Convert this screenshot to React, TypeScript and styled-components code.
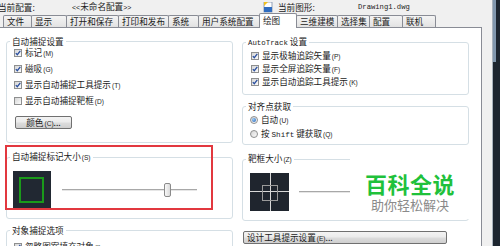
import React from 'react';
import styled, { createGlobalStyle } from 'styled-components';

const CJK = `"Noto Sans CJK SC", "Noto Sans", sans-serif`;
const MONO = `"Liberation Mono", "DejaVu Sans Mono", monospace`;
const SANS = `"Liberation Sans", Arial, sans-serif`;

const GlobalStyle = createGlobalStyle`
  html, body { margin: 0; padding: 0; background: #f0f0f0; }
  #root { width: 500px; height: 246px; overflow: hidden; }
`;

const Page = styled.div`
  width: 500px;
  height: 246px;
  display: flex;
  overflow: hidden;
  background: #f0f0f0;
  font-family: ${CJK};
  font-size: 8.6px;
  line-height: 12px;
  color: #1b1b1b;
`;

const Dialog = styled.div`
  width: 492px;
  flex: none;
  display: flex;
  flex-direction: column;
`;

const Header = styled.div`
  height: 13px;
  margin-left: -2px;
  display: grid;
  grid-template-columns: 74px 191px 15px 80px auto;
  align-items: center;
  white-space: nowrap;
`;

const Mono = styled.span<{ $size?: number }>`
  font-family: ${MONO};
  font-size: ${(p) => p.$size ?? 7.2}px;
`;

const Key = styled.span`
  font-family: ${SANS};
  font-size: 6.6px;
  margin-left: 1px;
`;

const Angle = styled.span`
  font-family: ${SANS};
  font-size: 7px;
`;

const TabStrip = styled.div`
  height: 15px;
  display: flex;
  align-items: flex-end;
  padding-left: 3px;
  position: relative;
  z-index: 1;
`;

const Tab = styled.div<{ $w: number; $active?: boolean }>`
  width: ${(p) => p.$w}px;
  box-sizing: border-box;
  margin-left: -1px;
  &:first-child {
    margin-left: 0;
  }
  height: ${(p) => (p.$active ? 15 : 12)}px;
  margin-bottom: ${(p) => (p.$active ? -1 : 0)}px;
  padding-left: 3px;
  border: 1px solid #898c95;
  border-bottom: none;
  border-radius: 2px 2px 0 0;
  background: ${(p) => (p.$active ? '#ffffff' : 'linear-gradient(#f4f4f4, #e2e2e2)')};
  line-height: ${(p) => (p.$active ? 12 : 10)}px;
  white-space: nowrap;
  overflow: hidden;
  position: relative;
  z-index: ${(p) => (p.$active ? 1 : 0)};
`;

const Panel = styled.div`
  flex: 1;
  margin-left: -1px;
  width: 483px;
  box-sizing: border-box;
  border: 1px solid #898c95;
  background: #ffffff;
  padding: 8px 0 0 6px;
  display: flex;
  align-items: flex-start;
  gap: 9px;
  position: relative;
`;

const Column = styled.div`
  width: 227px;
  flex: none;
  display: flex;
  flex-direction: column;
`;

const Group = styled.fieldset<{ $mt?: number }>`
  margin: ${(p) => p.$mt ?? 0}px 0 0 0;
  padding: 0;
  min-width: 0;
  border: 1px solid #d5dfe5;
  border-radius: 3px;
`;

const Legend = styled.legend`
  margin-left: 3px;
  padding: 0 2px;
  line-height: 10px;
  white-space: nowrap;
`;

const GroupBody = styled.div<{ $h: number; $pt: number; $pl: number }>`
  box-sizing: border-box;
  height: ${(p) => p.$h}px;
  padding: ${(p) => p.$pt}px 0 0 ${(p) => p.$pl}px;
  overflow: hidden;
`;

const Rows = styled.div<{ $gap: number }>`
  display: flex;
  flex-direction: column;
  gap: ${(p) => p.$gap}px;
`;

const Row = styled.div`
  height: 12px;
  display: flex;
  align-items: center;
  gap: 3px;
  white-space: nowrap;
`;

const Box = styled.span<{ $round?: boolean }>`
  width: 8px;
  height: 8px;
  box-sizing: border-box;
  flex: none;
  border: 1px solid #8e8f8f;
  border-radius: ${(p) => (p.$round ? '50%' : '0')};
  background: linear-gradient(135deg, #d6d6d6, #fbfbfb);
  display: flex;
  align-items: center;
  justify-content: center;
`;

const Dot = styled.span`
  width: 4px;
  height: 4px;
  border-radius: 50%;
  background: radial-gradient(circle at 35% 35%, #9acbf6, #1c5bb4);
`;

const Button = styled.button<{ $w: number; $mt?: number; $ml?: number; $center?: boolean }>`
  display: block;
  width: ${(p) => p.$w}px;
  height: 13px;
  margin: ${(p) => p.$mt ?? 0}px 0 0 ${(p) => p.$ml ?? 0}px;
  box-sizing: border-box;
  padding: 0 0 0 ${(p) => (p.$center ? 0 : 3)}px;
  border: 1px solid #707070;
  border-radius: 2px;
  background: linear-gradient(#f3f3f3 0%, #ebebeb 48%, #dddddd 52%, #cfcfcf 100%);
  font: inherit;
  line-height: 11px;
  color: inherit;
  text-align: ${(p) => (p.$center ? 'center' : 'left')};
  white-space: nowrap;
`;

const SizeRow = styled.div`
  display: flex;
  align-items: center;
  height: 38px;
`;

const Slider = styled.div<{ $w: number; $ml: number }>`
  width: ${(p) => p.$w}px;
  margin-left: ${(p) => p.$ml}px;
  height: 14px;
  position: relative;
  display: flex;
  align-items: center;
`;

const Track = styled.div`
  width: 100%;
  height: 2px;
  box-sizing: border-box;
  border-top: 1px solid #a8a8a8;
  background: #e6e6e6;
`;

const Thumb = styled.div`
  position: absolute;
  top: 0;
  width: 7px;
  height: 14px;
  box-sizing: border-box;
  border: 1px solid #8a8a8a;
  border-radius: 2px;
  background: linear-gradient(90deg, #f8f8f8, #dadada);
`;

const Highlight = styled.div`
  position: absolute;
  left: 5px;
  top: 117px;
  width: 208px;
  height: 65px;
  box-sizing: border-box;
  border: 2px solid #e2383f;
  pointer-events: none;
`;

const Watermark = styled.div`
  position: absolute;
  left: 350px;
  top: 131px;
  width: 120px;
  height: 60px;
  background: #ffffff;
  display: flex;
  flex-direction: column;
  align-items: center;
  padding-top: 13px;
  box-sizing: border-box;
`;

const WmTitle = styled.div`
  font-size: 22px;
  line-height: 22px;
  font-weight: 700;
  color: #1fc13b;
  letter-spacing: 0.5px;
`;

const WmSub = styled.div`
  margin-top: 4px;
  font-size: 13px;
  line-height: 14px;
  color: #8a8a8a;
`;

const Desktop = styled.div`
  flex: 1;
  background: #1d2630;
  border-left: 1px solid #a9b3bd;
`;

const DeskBar = styled.div`
  width: 3px;
  height: 62px;
  background: #8197ad;
`;

const Check = ({ on }: { on?: boolean }) => (
  <Box>
    {on && (
      <svg width="6" height="6" viewBox="0 0 6 6">
        <path d="M0.8 3.1 L2.3 4.7 L5.3 0.9" fill="none" stroke="#2a4f9f" strokeWidth="1.3" />
      </svg>
    )}
  </Box>
);

const Radio = ({ on }: { on?: boolean }) => <Box $round>{on && <Dot />}</Box>;

const DocIcon = () => (
  <svg width="11" height="11" viewBox="0 0 11 11">
    <rect x="1" y="0" width="8" height="10" fill="#ffffff" stroke="#7a8ca8" strokeWidth="0.8" />
    <rect x="1" y="5" width="8" height="5" fill="#2f6cc0" />
    <path d="M1 0 L5 0 L1 4 Z" fill="#f0c020" />
  </svg>
);

const MarkerPreview = () => (
  <svg width="38" height="38" viewBox="0 0 38 38">
    <rect width="38" height="38" fill="#212832" />
    <rect x="7" y="7" width="23" height="24" fill="none" stroke="#1a9a1a" strokeWidth="2" />
  </svg>
);

const AperturePreview = () => (
  <svg width="39" height="38" viewBox="0 0 39 38">
    <rect width="39" height="38" fill="#1f252e" />
    <line x1="20.5" y1="0" x2="20.5" y2="38" stroke="#d8d8d8" strokeWidth="1" />
    <line x1="0" y1="18.5" x2="39" y2="18.5" stroke="#d8d8d8" strokeWidth="1" />
    <rect x="12.5" y="12.5" width="15" height="15" fill="none" stroke="#9a9a9a" strokeWidth="1" />
  </svg>
);

const SizeSlider = ({ w, ml, value }: { w: number; ml: number; value: number }) => (
  <Slider $w={w} $ml={ml}>
    <Track />
    <Thumb style={{ left: `${value * (w - 7)}px` }} />
  </Slider>
);

const tabs: { label: string; w: number; active?: boolean }[] = [
  { label: '文件', w: 29 },
  { label: '显示', w: 36 },
  { label: '打开和保存', w: 53 },
  { label: '打印和发布', w: 51 },
  { label: '系统', w: 31 },
  { label: '用户系统配置', w: 62 },
  { label: '绘图', w: 38, active: true },
  { label: '三维建模', w: 42 },
  { label: '选择集', w: 33 },
  { label: '配置', w: 34 },
  { label: '联机', w: 34 },
];

export default function App() {
  return (
    <Page>
      <GlobalStyle />
      <Dialog>
        <Header>
          <span>当前配置:</span>
          <span>
            <Angle>&lt;&lt;</Angle>未命名配置<Angle>&gt;&gt;</Angle>
          </span>
          <DocIcon />
          <span>当前图形:</span>
          <Mono>Drawing1.dwg</Mono>
        </Header>
        <TabStrip>
          {tabs.map((t) => (
            <Tab key={t.label} $w={t.w} $active={t.active}>
              {t.label}
            </Tab>
          ))}
        </TabStrip>
        <Panel>
          <Column>
            <Group>
              <Legend>自动捕捉设置</Legend>
              <GroupBody $h={96} $pt={1} $pl={7}>
                <Rows $gap={4}>
                  <Row>
                    <Check on />
                    <span>
                      标记<Key>(M)</Key>
                    </span>
                  </Row>
                  <Row>
                    <Check on />
                    <span>
                      磁吸<Key>(G)</Key>
                    </span>
                  </Row>
                  <Row>
                    <Check on />
                    <span>
                      显示自动捕捉工具提示<Key>(T)</Key>
                    </span>
                  </Row>
                  <Row>
                    <Check />
                    <span>
                      显示自动捕捉靶框<Key>(D)</Key>
                    </span>
                  </Row>
                </Rows>
                <Button $w={57} $mt={9} $ml={1} $center>
                  颜色<Key>(C)</Key>...
                </Button>
              </GroupBody>
            </Group>
            <Group $mt={8}>
              <Legend>
                自动捕捉标记大小<Key>(S)</Key>
              </Legend>
              <GroupBody $h={55} $pt={8} $pl={6}>
                <SizeRow>
                  <MarkerPreview />
                  <SizeSlider w={135} ml={11} value={0.8} />
                </SizeRow>
              </GroupBody>
            </Group>
            <Group $mt={6}>
              <Legend>对象捕捉选项</Legend>
              <GroupBody $h={30} $pt={6} $pl={7}>
                <Row>
                  <Check on />
                  <span>
                    忽略图案填充对象<Key>(I)</Key>
                  </span>
                </Row>
              </GroupBody>
            </Group>
          </Column>
          <Column>
            <Group>
              <Legend>
                <Mono $size={7.4}>AutoTrack</Mono> 设置
              </Legend>
              <GroupBody $h={46} $pt={2} $pl={8}>
                <Rows $gap={1}>
                  <Row>
                    <Check on />
                    <span>
                      显示极轴追踪矢量<Key>(P)</Key>
                    </span>
                  </Row>
                  <Row>
                    <Check on />
                    <span>
                      显示全屏追踪矢量<Key>(F)</Key>
                    </span>
                  </Row>
                  <Row>
                    <Check on />
                    <span>
                      显示自动追踪工具提示<Key>(K)</Key>
                    </span>
                  </Row>
                </Rows>
              </GroupBody>
            </Group>
            <Group $mt={6}>
              <Legend>对齐点获取</Legend>
              <GroupBody $h={33} $pt={3} $pl={7}>
                <Rows $gap={2}>
                  <Row>
                    <Radio on />
                    <span>
                      自动<Key>(U)</Key>
                    </span>
                  </Row>
                  <Row>
                    <Radio />
                    <span>
                      按 <Mono $size={7.6}>Shift</Mono> 键获取<Key>(Q)</Key>
                    </span>
                  </Row>
                </Rows>
              </GroupBody>
            </Group>
            <Group $mt={8}>
              <Legend>
                靶框大小<Key>(Z)</Key>
              </Legend>
              <GroupBody $h={55} $pt={8} $pl={7}>
                <SizeRow>
                  <AperturePreview />
                  <SizeSlider w={140} ml={10} value={0.6} />
                </SizeRow>
              </GroupBody>
            </Group>
            <Button $w={204} $mt={10} $ml={1}>
              设计工具提示设置<Key>(E)</Key>...
            </Button>
          </Column>
          <Highlight />
          <Watermark>
            <WmTitle>百科全说</WmTitle>
            <WmSub>助你轻松解决</WmSub>
          </Watermark>
        </Panel>
      </Dialog>
      <Desktop>
        <DeskBar />
      </Desktop>
    </Page>
  );
}
